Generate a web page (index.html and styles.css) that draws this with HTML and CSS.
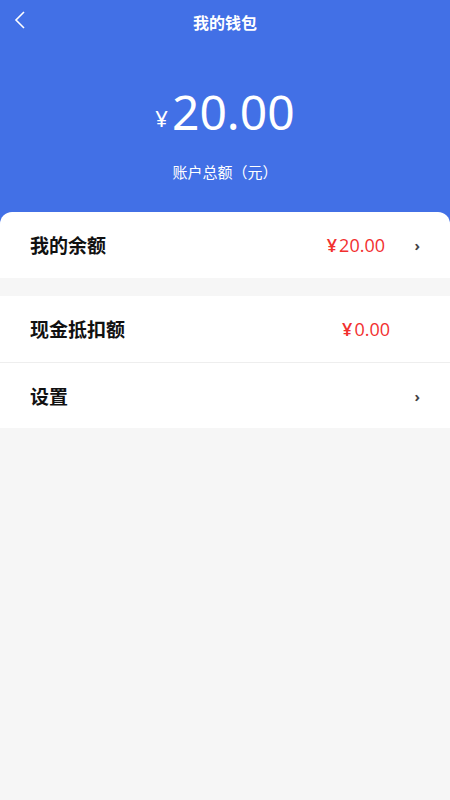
FILE: index.html
```html
<!DOCTYPE html>
<html>
<head>
    <meta charset="utf-8">
    <title>我的钱包</title>
    <link rel="stylesheet" href="styles.css">
</head>
<body>
    <div class="header">
        <div class="nav">
            <div class="back">
                <svg width="14" height="20" viewBox="0 0 14 20">
                    <polyline points="11,2 3,10 11,18" fill="none" stroke="#fff" stroke-width="1.6"/>
                </svg>
            </div>
            <div class="title">我的钱包</div>
        </div>
        <div class="total">
            <span class="yen">¥</span><span class="num">20.00</span>
        </div>
        <div class="label">账户总额（元）</div>
    </div>

    <div class="group first">
        <div class="row">
            <div class="name">我的余额</div>
            <div class="value"><span class="cur">¥</span>20.00</div>
            <div class="arrow">›</div>
        </div>
    </div>

    <div class="group">
        <div class="row">
            <div class="name">现金抵扣额</div>
            <div class="value"><span class="cur">¥</span>0.00</div>
            <div class="arrow blank"></div>
        </div>
        <div class="row line">
            <div class="name">设置</div>
            <div class="arrow">›</div>
        </div>
    </div>
</body>
</html>
```

FILE: styles.css
```css
body {
    margin: 0;
    background-color: #f6f6f6;
    font-family: "Noto Sans", "Noto Sans CJK SC", sans-serif;
}
.header {
    background-color: #4270e6;
    color: #fff;
    height: 224px;
}
.nav {
    height: 44px;
    display: flex;
    align-items: center;
    justify-content: center;
    position: relative;
}
.back {
    position: absolute;
    left: 13px;
    top: 10px;
}
.title {
    font-size: 16px;
    font-weight: bold;
}
.total {
    text-align: center;
    margin-top: 36px;
    line-height: 64px;
}
.yen {
    font-size: 22px;
    vertical-align: 3px;
    margin-right: 4px;
}
.num {
    font-size: 48px;
}
.label {
    text-align: center;
    font-size: 15px;
    margin-top: 5px;
}
.group {
    background-color: #fff;
    margin-bottom: 18px;
}
.group.first {
    margin-top: -12px;
    border-radius: 12px 12px 0 0;
}
.row {
    display: flex;
    align-items: center;
    height: 66px;
    padding: 0 30px;
}
.row.line {
    border-top: 1px solid #eeeeee;
    height: 65px;
}
.name {
    flex: 1;
    font-size: 19px;
    font-weight: bold;
    color: #111;
}
.value {
    font-family: "Open Sans", "Noto Sans CJK SC", sans-serif;
    font-size: 18px;
    color: #f2302f;
}
.cur {
    font-weight: 600;
    margin-right: 2px;
}
.arrow {
    width: 35px;
    text-align: right;
    font-size: 15px;
    font-weight: bold;
    color: #444;
}
.arrow.blank {
    width: 30px;
}
```
